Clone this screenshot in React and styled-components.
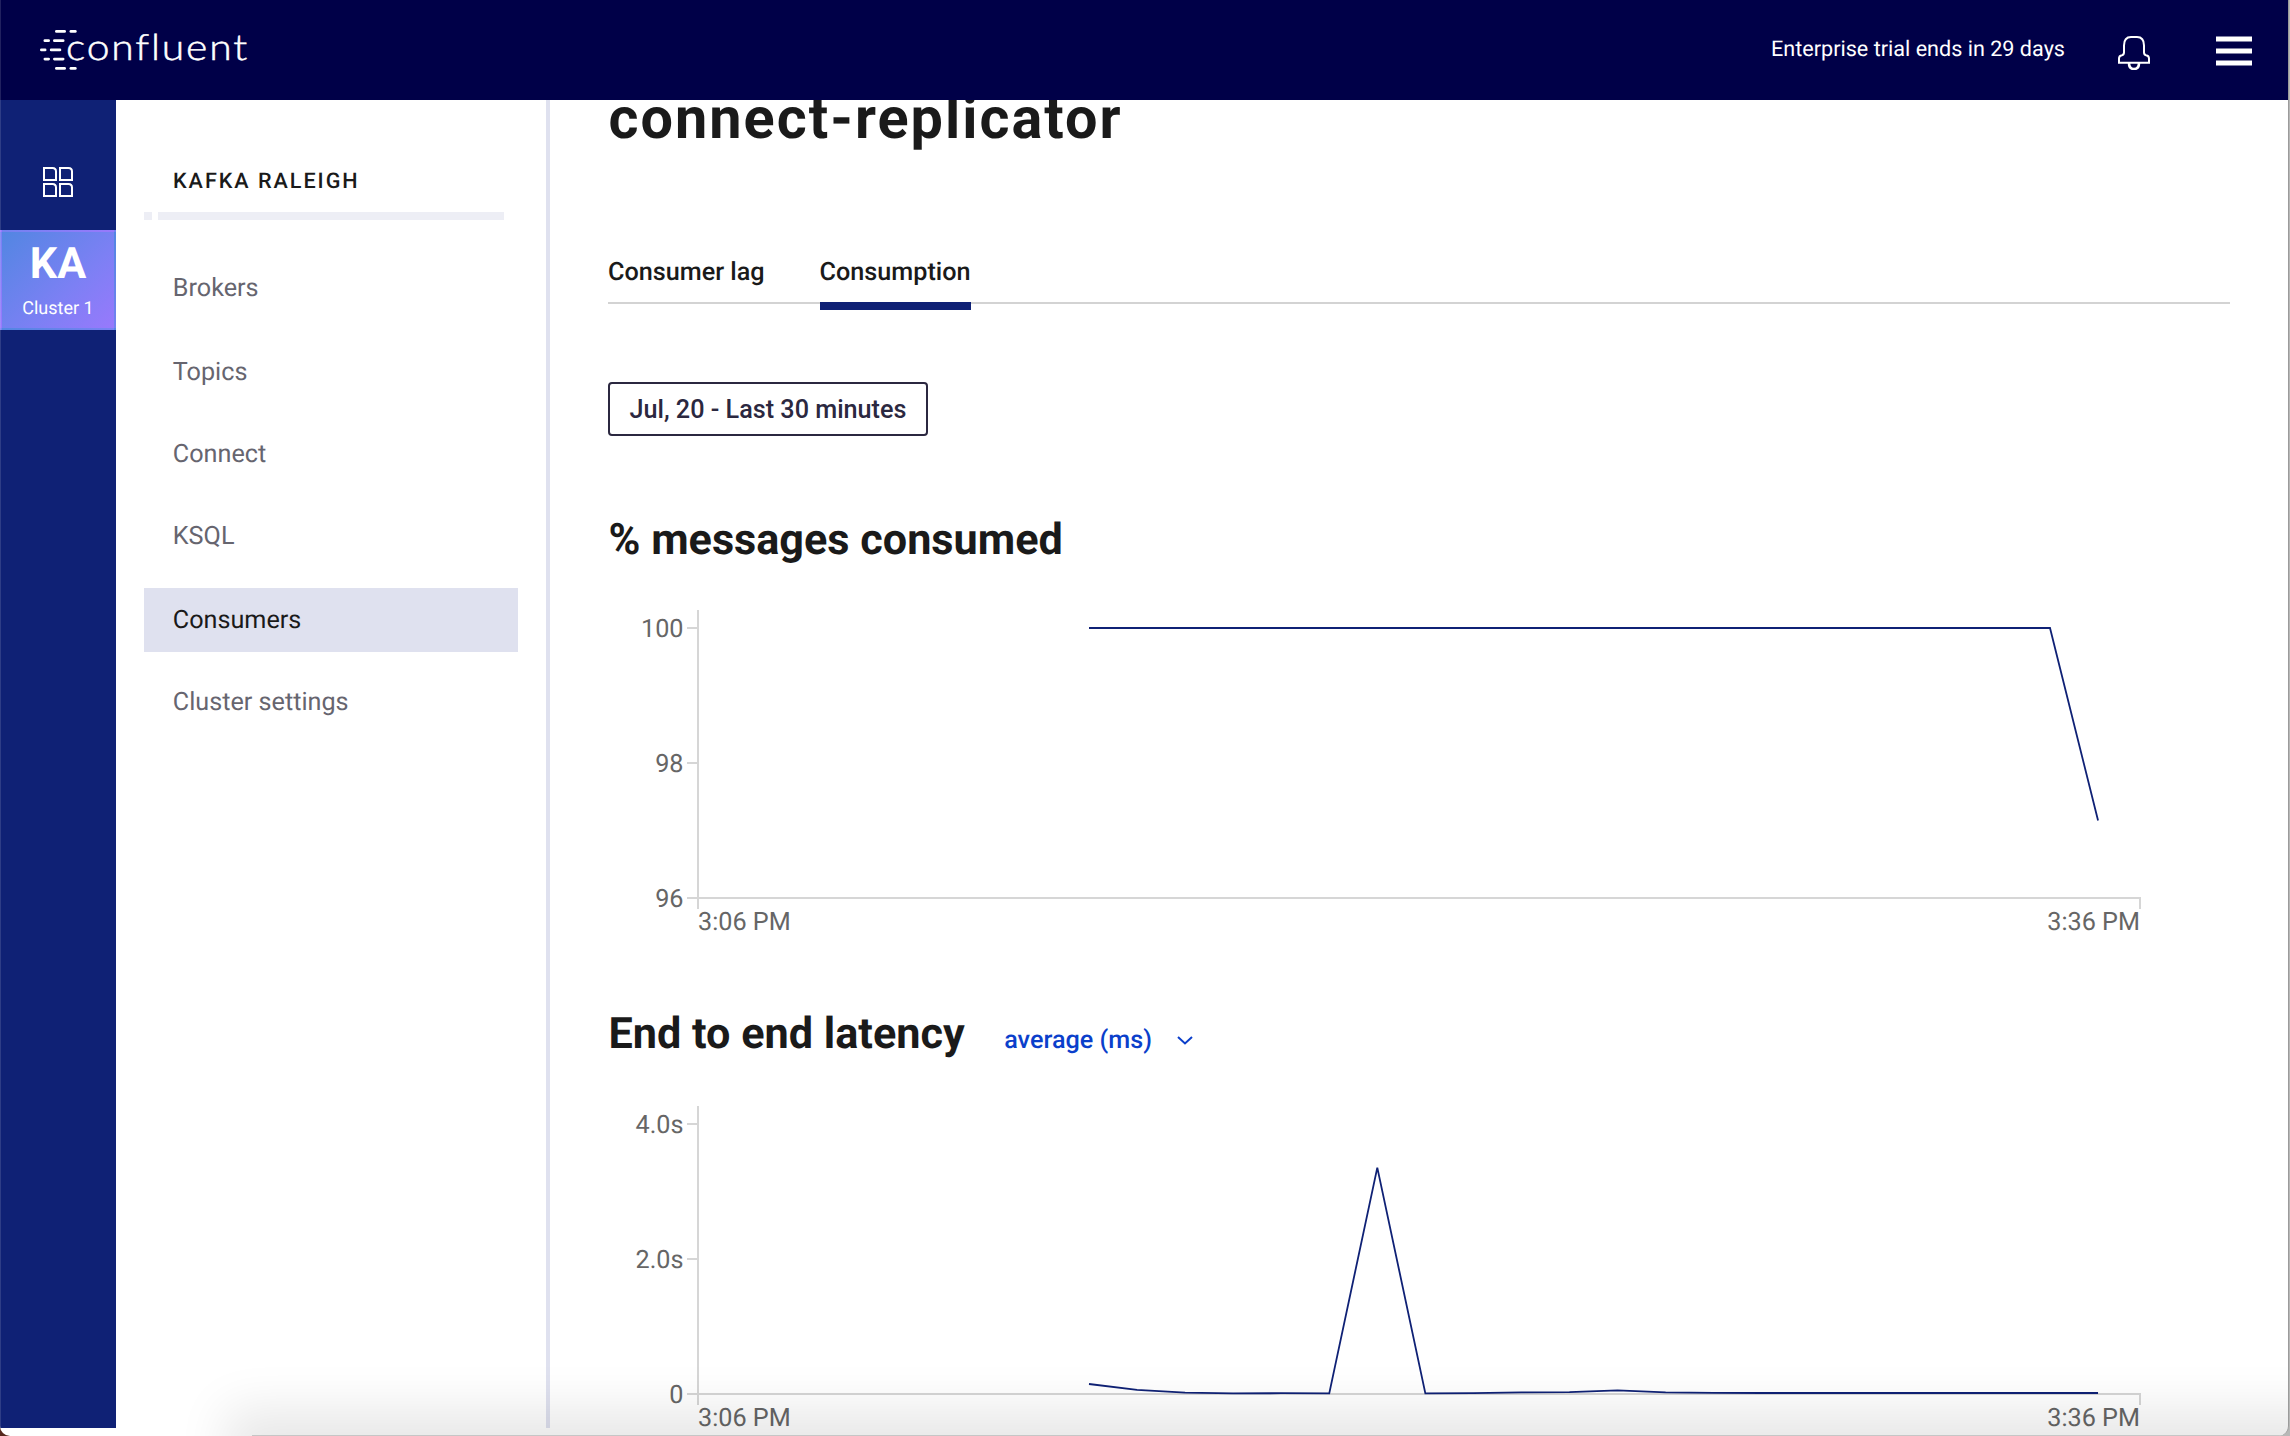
import React from "react";
import styled, { createGlobalStyle } from "styled-components";

const Global = createGlobalStyle`
  *, *::before, *::after { box-sizing: border-box; }
  body {
    margin: 0;
    overflow: hidden;
    font-family: Roboto, "Liberation Sans", sans-serif;
    text-rendering: geometricPrecision;
    -webkit-font-smoothing: antialiased;
  }
`;

const navy = "#000048";
const blue = "#0f2175";
const ink = "#1a1a1a";

const Desktop = styled.div`
  width: 2290px;
  height: 1436px;
  overflow: hidden;
  background: linear-gradient(90deg, #55281c 0 40px, #b7b8b7 40px);
`;

const Window = styled.div`
  position: relative;
  display: flex;
  flex-direction: column;
  width: 2289px;
  height: 1436px;
  overflow: hidden;
  background: #fff;
  border-right: 1px solid #9b9b9b;
  border-radius: 0 0 10px 10px;
`;

const Header = styled.header`
  flex: none;
  height: 100px;
  display: flex;
  align-items: flex-start;
  padding: 30px 36px 0 40px;
  background: ${navy};
  color: #fff;
`;

const Trial = styled.span`
  margin: 7px 53px 0 auto;
  font-size: 21.6px;
  line-height: 26px;
  white-space: nowrap;
`;

const BellIcon = styled.svg`
  margin: 6px 66px 0 0;
`;

const MenuIcon = styled.svg`
  margin-top: 6px;
`;

const Wordmark = styled.text`
  font-family: Lato, Roboto, sans-serif;
  font-weight: 300;
  font-size: 36px;
  font-variant-ligatures: none;
  letter-spacing: 1.6px;
  fill: #fff;
  stroke: #fff;
  stroke-width: 0.5px;
`;

const Body = styled.div`
  flex: none;
  display: flex;
  height: 1328px;
`;

const Rail = styled.nav`
  flex: none;
  width: 116px;
  display: flex;
  flex-direction: column;
  align-items: center;
  padding-top: 67px;
  background: ${blue};
  color: #fff;
`;

const Tile = styled.div`
  width: 116px;
  height: 100px;
  margin-top: 33px;
  padding-top: 10px;
  border: 2px solid transparent;
  background-image: linear-gradient(135deg, #5286e2, #7c80f4 60%, #9879fc);
  text-align: center;
`;

const Initials = styled.div`
  font-size: 43.2px;
  font-weight: 700;
  line-height: 44px;
`;

const ClusterLabel = styled.div`
  margin-top: 11px;
  font-size: 18px;
  line-height: 24px;
`;

const Sidebar = styled.aside`
  flex: none;
  width: 434px;
  padding: 69px 28px 0;
  border-right: 4px solid #dfe1ef;
`;

const ClusterName = styled.div`
  padding-left: 29px;
  font-size: 21.6px;
  font-weight: 500;
  line-height: 26px;
  letter-spacing: 1.96px;
  color: ${ink};
`;

const Rule = styled.div`
  display: grid;
  grid-template-columns: 8px 346px;
  column-gap: 6px;
  margin-top: 17px;
`;

const RuleBar = styled.div`
  height: 8px;
  background: #edeef5;
`;

const NavList = styled.div`
  display: grid;
  grid-template-rows: 84px 82px 82px 84px 82px 64px;
  margin-top: 36px;
`;

const NavItem = styled.div`
  height: 64px;
  padding-left: 28.8px;
  font-size: 25.2px;
  line-height: 65px;
  color: ${(p) => (p.$active ? ink : "#66656f")};
  background: ${(p) => (p.$active ? "#dfe1ef" : "transparent")};
`;

const Main = styled.main`
  flex: 1;
  height: 1336px;
  overflow: hidden;
  padding: 0 58px;
`;

const Title = styled.h1`
  margin: -14px 0 0;
  padding-left: 0.5px;
  font-size: 57.6px;
  font-weight: 700;
  line-height: 68px;
  letter-spacing: 2px;
  color: ${ink};
`;

const Tabs = styled.div`
  display: flex;
  gap: 55px;
  margin-top: 104px;
  border-bottom: 2px solid #d3d3d3;
`;

const Tab = styled.div`
  margin-bottom: -8px;
  padding-bottom: 14px;
  border-bottom: 8px solid ${(p) => (p.$active ? blue : "transparent")};
  background-clip: padding-box;
  font-size: 25.2px;
  font-weight: 500;
  line-height: 30px;
  color: ${ink};
`;

const RangeButton = styled.button`
  display: block;
  width: 320px;
  height: 54px;
  margin-top: 78px;
  padding: 2px 0 0;
  border: 2px solid #2b2840;
  border-radius: 4px;
  background: #fff;
  font: 500 25.2px/48px Roboto, sans-serif;
  color: #2b2840;
`;

const SectionHead = styled.div`
  display: flex;
  align-items: baseline;
  height: ${(p) => p.$height}px;
  margin-top: ${(p) => p.$top}px;
`;

const SectionTitle = styled.h2`
  margin: 0;
  padding-left: 0.5px;
  font-size: 43.2px;
  font-weight: 700;
  line-height: 50px;
  color: ${ink};
`;

const Metric = styled.div`
  display: flex;
  align-items: center;
  gap: 25.5px;
  margin-left: 39.5px;
  font-size: 25.2px;
  font-weight: 500;
  line-height: 30px;
  color: #0b3fcb;
`;

const Plot = styled.svg`
  display: block;
  margin-top: 35px;
  overflow: visible;
`;

const AxisText = styled.text`
  font-family: Roboto, sans-serif;
  font-size: 25.2px;
  fill: #666;
`;

const DockShade = styled.div`
  position: absolute;
  top: 1435px;
  left: 252px;
  right: -100px;
  height: 60px;
  background: #c6c6c6;
  box-shadow: 0 0 50px 26px rgba(0, 0, 0, 0.095);
  pointer-events: none;
`;

const EdgeLight = styled.div`
  position: absolute;
  top: 0;
  left: 0;
  width: 1px;
  height: 1428px;
  background: rgba(255, 255, 255, 0.13);
`;

const dashes = [
  [15, 1.4, 11], [29.5, 1.4, 7.2],
  [3.5, 10.7, 6.5], [13, 10.7, 11.5],
  [0, 19.9, 6.5], [9.8, 19.9, 11.5],
  [3.5, 29.1, 6.5], [13, 29.1, 11.5],
  [15, 38.4, 11], [29.5, 38.4, 7.2],
];

function Logo() {
  return (
    <svg width="212" height="40" viewBox="0 0 212 40" fill="none" overflow="visible">
      {dashes.map(([x, y, w], i) => (
        <path key={i} d={`M${x + 1.4} ${y}h${w - 2.8}`} stroke="#fff" strokeWidth="2.8" strokeLinecap="round" />
      ))}
      <Wordmark x="26" y="29.6" textLength="183" lengthAdjust="spacingAndGlyphs">confluent</Wordmark>
    </svg>
  );
}

const step = 48.05;
const latency = [
  1384, 1389.9, 1392.6, 1393.4, 1393.2, 1393.4, 1167.6, 1393.4, 1393.2, 1392.4, 1392.2,
  1390.4, 1392.3, 1392.8, 1393, 1393, 1393, 1393, 1393, 1393, 1393, 1393,
].map((y) => y - 1096);
const consumed = [...Array(21).fill(28), 220.5];

function Chart({ labels, values }) {
  const points = values.map((y, i) => `${481 + i * step},${y}`).join(" ");
  return (
    <Plot width="1622" height="340" viewBox="0 0 1622 340">
      <g stroke="#d6d6d6" strokeWidth="2">
        <path d="M90 10V309M79 28H90M79 163H90M79 298H1532V309" fill="none" />
      </g>
      {labels.map((label, i) => (
        <AxisText key={label} x="75.5" y={37 + i * 135} textAnchor="end">{label}</AxisText>
      ))}
      <AxisText x="90" y="330">3:06 PM</AxisText>
      <AxisText x="1532" y="330" textAnchor="end">3:36 PM</AxisText>
      <polyline points={points} fill="none" stroke={blue} strokeWidth="1.8" />
    </Plot>
  );
}

const items = ["Brokers", "Topics", "Connect", "KSQL", "Consumers", "Cluster settings"];

export default function App() {
  return (
    <Desktop>
      <Global />
      <Window>
        <Header>
          <Logo />
          <Trial>Enterprise trial ends in 29 days</Trial>
          <BellIcon width="32" height="34" viewBox="0 0 32 34" fill="none" stroke="#fff" strokeWidth="2">
            <path d="M1 26.8V22.6Q1 19.6 4 19.2Q6 18.8 6 16.6V9.5Q6 1 13 1H19Q26 1 26 9.5V16.6Q26 18.8 28 19.2Q31 19.6 31 22.6V26.8Z" />
            <path d="M11 27Q11 33 16 33Q21 33 21 27" strokeWidth="2.6" />
          </BellIcon>
          <MenuIcon width="36" height="30" viewBox="0 0 36 30" fill="#fff">
            <path d="M0 .5H36V5.5H0zM0 12.5H36V17.5H0zM0 24.5H36V29.5H0z" />
          </MenuIcon>
        </Header>
        <Body>
          <Rail>
            <svg width="30" height="30" viewBox="0 0 30 30" fill="none" stroke="#fff" strokeWidth="2">
              <path d="M1 1H9.5Q13 1 13 4.5V13H1zM17 1H25.5Q29 1 29 4.5V13H17zM1 17H9.5Q13 17 13 20.5V29H1zM17 17H25.5Q29 17 29 20.5V29H17z" />
            </svg>
            <Tile>
              <Initials>KA</Initials>
              <ClusterLabel>Cluster 1</ClusterLabel>
            </Tile>
          </Rail>
          <Sidebar>
            <ClusterName>KAFKA RALEIGH</ClusterName>
            <Rule>
              <RuleBar />
              <RuleBar />
            </Rule>
            <NavList>
              {items.map((name) => (
                <NavItem key={name} $active={name === "Consumers"}>{name}</NavItem>
              ))}
            </NavList>
          </Sidebar>
          <Main>
            <Title>connect-replicator</Title>
            <Tabs>
              <Tab>Consumer lag</Tab>
              <Tab $active>Consumption</Tab>
            </Tabs>
            <RangeButton>Jul, 20 - Last 30 minutes</RangeButton>
            <SectionHead $top={79} $height={50}>
              <SectionTitle>% messages consumed</SectionTitle>
            </SectionHead>
            <Chart labels={["100", "98", "96"]} values={consumed} />
            <SectionHead $top={69} $height={52}>
              <SectionTitle>End to end latency</SectionTitle>
              <Metric>
                average (ms)
                <svg width="16" height="10" viewBox="0 0 16 10" fill="none" stroke="#0b3fcb" strokeWidth="2">
                  <path d="M1 1L8 7.5L15 1" />
                </svg>
              </Metric>
            </SectionHead>
            <Chart labels={["4.0s", "2.0s", "0"]} values={latency} />
          </Main>
        </Body>
        <DockShade />
        <EdgeLight />
      </Window>
    </Desktop>
  );
}
